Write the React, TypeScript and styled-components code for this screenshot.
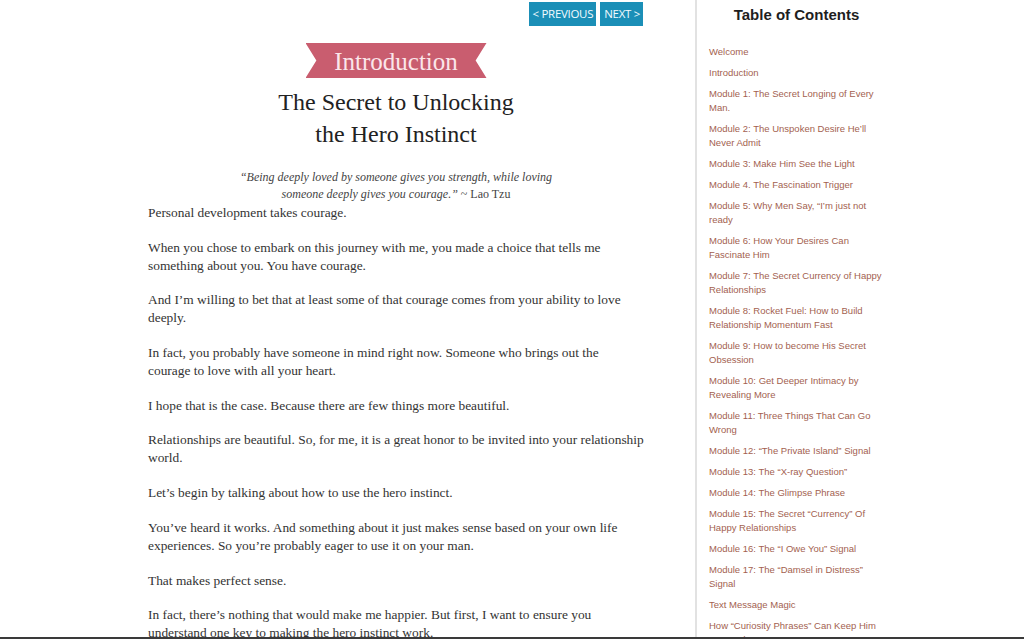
import React from 'react';
import styled, { createGlobalStyle } from 'styled-components';

const GlobalStyle = createGlobalStyle`
  html, body {
    margin: 0;
    padding: 0;
    background: #fff;
  }
  body {
    font-family: "Liberation Serif", "Times New Roman", serif;
  }
`

const Page = styled.div`
  width: 1024px;
  height: 637px;
  overflow: hidden;
  display: flex;
  border-bottom: 2px solid #3a3a3a;
  background: #fff;
`

const MainColumn = styled.main`
  width: 496px;
  padding: 2px 51px 0 148px;
  flex-shrink: 0;
`

const NavRow = styled.div`
  display: flex;
  justify-content: flex-end;
  gap: 4px;
  padding-right: 1px;
`

const NavButton = styled.a`
  display: block;
  background: #1b8fb7;
  color: #f2fbff;
  font-family: "Open Sans", sans-serif;
  font-size: 11.5px;
  line-height: 24px;
  height: 24px;
  padding: 0 3px 0 4px;
  text-decoration: none;
  letter-spacing: -0.3px;
`

const BannerWrap = styled.div`
  display: flex;
  justify-content: center;
  margin-top: 17px;
`

const Banner = styled.h2`
  margin: 0;
  width: 181px;
  height: 35px;
  background: #c95d6f;
  clip-path: polygon(0 0, 100% 0, 94% 50%, 100% 100%, 0 100%, 6% 50%);
  color: #fbe6ea;
  font-family: "Liberation Serif", serif;
  font-weight: normal;
  font-size: 25px;
  line-height: 37px;
  text-align: center;
`

const Title = styled.h1`
  margin: 8px 0 0;
  font-family: "Liberation Serif", serif;
  font-weight: normal;
  font-size: 24px;
  line-height: 32px;
  color: #222;
  text-align: center;
`

const Quote = styled.p`
  margin: 19px 0 1px;
  font-size: 12px;
  line-height: 17px;
  color: #444;
  text-align: center;
  em {
    font-style: italic;
  }
`

const Para = styled.p`
  margin: 0 0 16.7px;
  font-size: 13.4px;
  line-height: 18px;
  color: #333;
`

const Sidebar = styled.aside`
  border-left: 2px solid #e2e2e2;
  padding: 6px 0 0 12px;
  height: 100%;
  box-sizing: border-box;
`

const SideTitle = styled.h3`
  width: 175px;
  margin: 0 0 21px;
  text-align: center;
  font-family: "Liberation Sans", Arial, sans-serif;
  font-size: 15px;
  line-height: 18px;
  font-weight: bold;
  color: #1e1e1e;
`

const TocList = styled.ul`
  list-style: none;
  margin: 0;
  padding: 0;
  width: 178px;
`

const TocItem = styled.li`
  margin-bottom: 7px;
  font-family: "Liberation Sans", Arial, sans-serif;
  font-size: 9.5px;
  line-height: 14px;
  a {
    color: #a35f50;
    text-decoration: none;
  }
`

const toc = [
  'Welcome',
  'Introduction',
  'Module 1: The Secret Longing of Every Man.',
  'Module 2: The Unspoken Desire He\u2019ll Never Admit',
  'Module 3: Make Him See the Light',
  'Module 4. The Fascination Trigger',
  'Module 5: Why Men Say, \u201cI\u2019m just not ready',
  'Module 6: How Your Desires Can Fascinate Him',
  'Module 7: The Secret Currency of Happy Relationships',
  'Module 8: Rocket Fuel: How to Build Relationship Momentum Fast',
  'Module 9: How to become His Secret Obsession',
  'Module 10: Get Deeper Intimacy by Revealing More',
  'Module 11: Three Things That Can Go Wrong',
  'Module 12: \u201cThe Private Island\u201d Signal',
  'Module 13: The \u201cX-ray Question\u201d',
  'Module 14: The Glimpse Phrase',
  'Module 15: The Secret \u201cCurrency\u201d Of Happy Relationships',
  'Module 16: The \u201cI Owe You\u201d Signal',
  'Module 17: The \u201cDamsel in Distress\u201d Signal',
  'Text Message Magic',
  'How \u201cCuriosity Phrases\u201d Can Keep Him Focused',
]

const paragraphs = [
  'Personal development takes courage.',
  'When you chose to embark on this journey with me, you made a choice that tells me something about you. You have courage.',
  'And I\u2019m willing to bet that at least some of that courage comes from your ability to love deeply.',
  'In fact, you probably have someone in mind right now. Someone who brings out the courage to love with all your heart.',
  'I hope that is the case. Because there are few things more beautiful.',
  'Relationships are beautiful. So, for me, it is a great honor to be invited into your relationship world.',
  'Let\u2019s begin by talking about how to use the hero instinct.',
  'You\u2019ve heard it works. And something about it just makes sense based on your own life experiences. So you\u2019re probably eager to use it on your man.',
  'That makes perfect sense.',
  'In fact, there\u2019s nothing that would make me happier. But first, I want to ensure you understand one key to making the hero instinct work.',
]

function App() {
  return (
    <>
      <GlobalStyle />
      <Page>
        <MainColumn>
          <NavRow>
            <NavButton href="#">&lt; PREVIOUS</NavButton>
            <NavButton href="#">NEXT &gt;</NavButton>
          </NavRow>
          <BannerWrap>
            <Banner>Introduction</Banner>
          </BannerWrap>
          <Title>
            The Secret to Unlocking
            <br />
            the Hero Instinct
          </Title>
          <Quote>
            <em>&ldquo;Being deeply loved by someone gives you strength, while loving
            <br />
            someone deeply gives you courage.&rdquo;</em> ~ Lao Tzu
          </Quote>
          {paragraphs.map((p, i) => (
            <Para key={i}>{p}</Para>
          ))}
        </MainColumn>
        <Sidebar>
          <SideTitle>Table of Contents</SideTitle>
          <TocList>
            {toc.map((t) => (
              <TocItem key={t}>
                <a href="#">{t}</a>
              </TocItem>
            ))}
          </TocList>
        </Sidebar>
      </Page>
    </>
  );
}

export default App;
